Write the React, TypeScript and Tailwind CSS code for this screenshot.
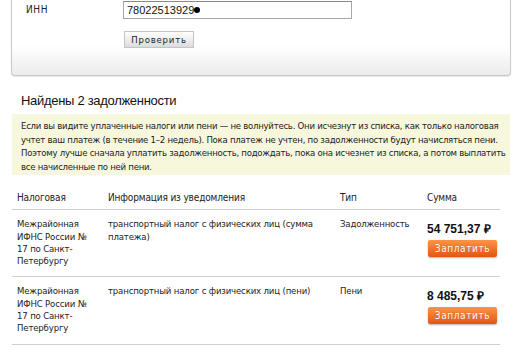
import React from "react";

const rows = [
  {
    office: "Межрайонная ИФНС России № 17 по Санкт-Петербургу",
    info: "транспортный налог с физических лиц (сумма платежа)",
    type: "Задолженность",
    sum: "54 751,37",
  },
  {
    office: "Межрайонная ИФНС России № 17 по Санкт-Петербургу",
    info: "транспортный налог с физических лиц (пени)",
    type: "Пени",
    sum: "8 485,75",
  },
];

function PayButton() {
  return (
    <button className="mt-[4px] ml-[1px] h-[17px] w-[69px] rounded-[2px] bg-gradient-to-b from-[#fb9446] to-[#e3560e] text-[10px] leading-[17px] tracking-[0.6px] text-white shadow-[0_1px_2px_rgba(0,0,0,0.3)] [text-shadow:0_0_1px_rgba(160,50,0,0.6)]">
      Заплатить
    </button>
  );
}

export default function App() {
  return (
    <div className="min-h-[353px] bg-white font-['DejaVu_Sans_Condensed','Liberation_Sans',sans-serif] text-[9.5px] tracking-[-0.15px] text-[#222]">
      {/* форма проверки ИНН */}
      <div className="ml-[11px] mr-[4px] h-[76px] rounded-b-[4px] border-x border-b border-[#c8c8c8] bg-gradient-to-b from-white from-60% to-[#ececec] shadow-[0_1px_1px_rgba(0,0,0,0.1)]">
        <div className="flex pt-[1px]">
          <span className="ml-[14px] mt-[1px] w-[97px] text-[10px] tracking-[0.6px]">ИНН</span>
          <div className="flex h-[18px] w-[229px] items-center border border-[#a8a8a8] border-t-[#8a8a8a] bg-white pl-[3px] font-['Liberation_Sans',sans-serif] text-[11px] tracking-normal text-[#111]">
            78022513929
            <span className="inline-block h-[6px] w-[6px] rounded-full bg-black" />
          </div>
        </div>
        <button className="ml-[112px] mt-[12px] h-[17px] w-[70px] border border-[#c4c4c4] bg-gradient-to-b from-white to-[#dcdcdc] text-[9.5px] leading-[15px] tracking-[0.8px] text-[#222]">
          Проверить
        </button>
      </div>

      <h2 className="ml-[21px] mt-[16px] font-['Liberation_Sans',sans-serif] text-[13px] leading-[18px] tracking-[-0.3px] text-[#111]">
        Найдены 2 задолженности
      </h2>

      <div className="ml-[12px] mr-[5px] mt-[4px] bg-[#f7f7dd] pb-[2px] pl-[9px] pt-[5px] leading-[13.5px] tracking-[-0.25px] text-[#222]">
        Если вы видите уплаченные налоги или пени — не волнуйтесь. Они исчезнут из списка, как только налоговая учтет ваш платеж (в течение 1–2 недель). Пока платеж не учтен, по задолженности будут начисляться пени. Поэтому лучше сначала уплатить задолженность, подождать, пока она исчезнет из списка, а потом выплатить все начисленные по ней пени.
      </div>

      {/* таблица задолженностей */}
      <div className="ml-[12px] mr-[15px] mt-[17px] leading-[12.3px]">
        <div className="flex border-b border-[#cfcfcf] pb-[5px] text-[10px]">
          <div className="w-[96px] pl-[5px]">Налоговая</div>
          <div className="w-[232px]">Информация из уведомления</div>
          <div className="w-[87px]">Тип</div>
          <div>Сумма</div>
        </div>
        {rows.map((r) => (
          <div key={r.sum} className="flex border-b border-[#cfcfcf] pb-[9px] pt-[8px]">
            <div className="w-[96px] pl-[5px] pr-[12px]">{r.office}</div>
            <div className="w-[232px] pr-[20px]">{r.info}</div>
            <div className="w-[87px]">{r.type}</div>
            <div className="pt-[4px]">
              <div className="font-['Liberation_Sans',sans-serif] text-[12px] font-bold leading-[14px] tracking-normal text-[#111]">
                {r.sum} <span>₽</span>
              </div>
              <PayButton />
            </div>
          </div>
        ))}
      </div>
    </div>
  );
}
